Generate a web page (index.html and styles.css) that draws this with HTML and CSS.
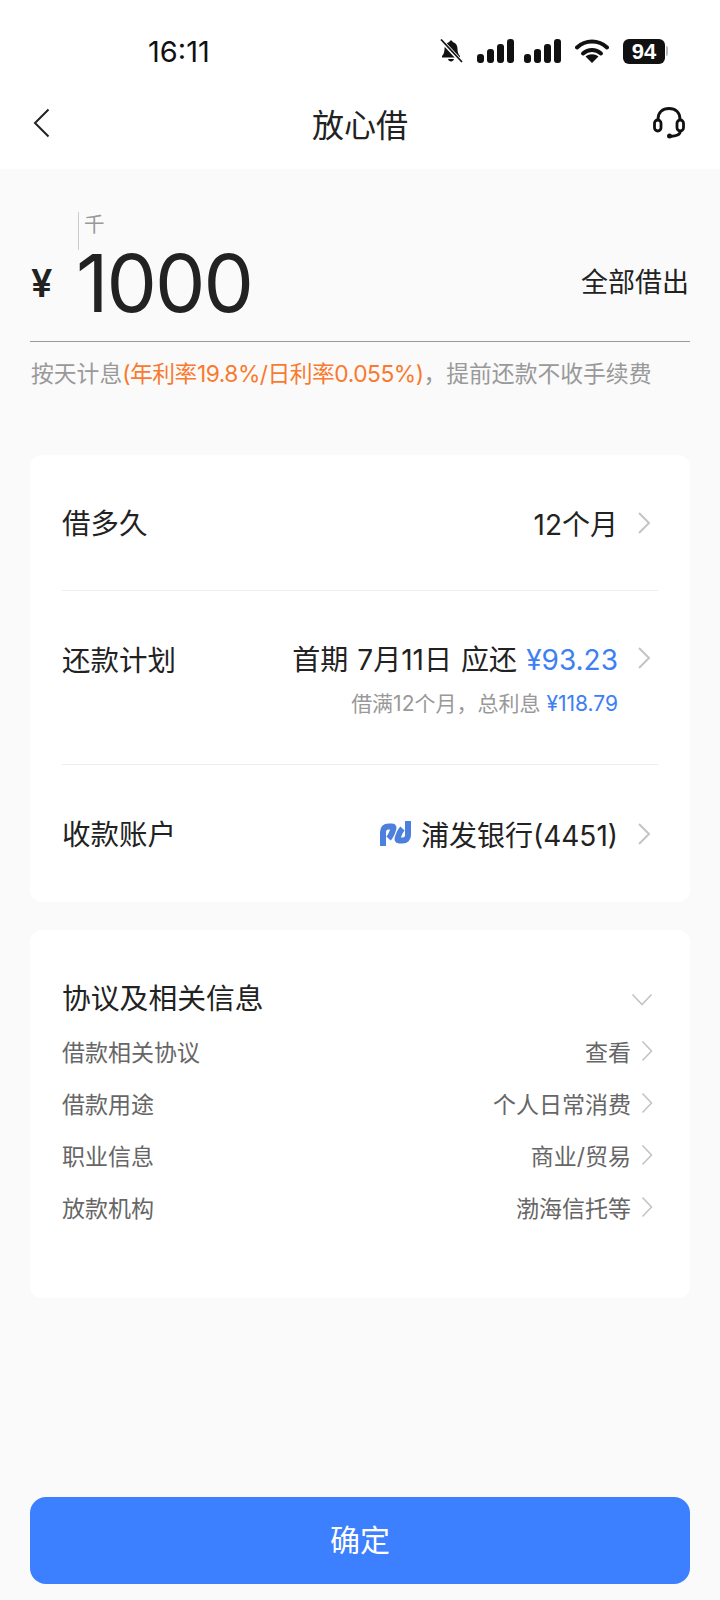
FILE: index.html
```html
<!DOCTYPE html>
<html lang="zh-CN">

<head>
    <meta charset="UTF-8">
    <meta name="viewport" content="width=device-width, initial-scale=1.0">
    <title>放心借</title>
    <link rel="stylesheet" href="styles.css">
</head>

<body>
    <div class="page">
        <header class="top">
            <div class="status">
                <span class="time">16:11</span>
                <div class="status-icons">
                    <svg class="ic-bell" width="24" height="24" viewBox="0 0 24 24">
                        <path d="M12 1.500c.9 0 1.600.7 1.700 1.500 3.300.8 4.800 3.500 4.800 6.800 0 3 .6 5.200 2.500 7.200v1.500H3V17c1.900-2 2.500-4.200 2.500-7.200 0-3.300 1.500-6 4.800-6.800.1-.8.8-1.500 1.700-1.500zM9 20h6c-.3 1.500-1.500 2.500-3 2.500S9.300 21.500 9 20z" fill="#111"/>
                        <path d="M1.500 0.500 22.500 23" stroke="#fff" stroke-width="4"/>
                        <path d="M2 0.500 23 23" stroke="#111" stroke-width="1.700"/>
                    </svg>
                    <svg class="ic-signal" width="37" height="24" viewBox="0 0 37 24">
                        <rect x="0" y="15" width="7" height="9" rx="3" fill="#111"/>
                        <rect x="10" y="10" width="7" height="14" rx="3" fill="#111"/>
                        <rect x="20" y="5" width="7" height="19" rx="3" fill="#111"/>
                        <rect x="30" y="0" width="7" height="24" rx="3" fill="#111"/>
                    </svg>
                    <svg class="ic-signal" width="37" height="24" viewBox="0 0 37 24">
                        <rect x="0" y="15" width="7" height="9" rx="3" fill="#111"/>
                        <rect x="10" y="10" width="7" height="14" rx="3" fill="#111"/>
                        <rect x="20" y="5" width="7" height="19" rx="3" fill="#111"/>
                        <rect x="30" y="0" width="7" height="24" rx="3" fill="#111"/>
                    </svg>
                    <svg class="ic-wifi" width="34" height="24" viewBox="0 0 34 24">
                        <path d="M2 8.500C10.500 .5 23.500 .5 32 8.500" fill="none" stroke="#111" stroke-width="4" stroke-linecap="round"/>
                        <path d="M8 14.500c5.200-4.700 12.800-4.700 18 0" fill="none" stroke="#111" stroke-width="4" stroke-linecap="round"/>
                        <path d="M17 24l-6.500-6.500c3.700-3 9.300-3 13 0z" fill="#111"/>
                    </svg>
                    <div class="battery">
                        <span class="battery-num">94</span>
                        <span class="battery-cap"></span>
                    </div>
                </div>
            </div>
            <nav class="nav">
                <svg class="ic-back" width="18" height="30" viewBox="0 0 18 30">
                    <path d="M15.500 1.500 2 15l13.500 13.500" fill="none" stroke="#222" stroke-width="2"/>
                </svg>
                <h1 class="nav-title">放心借</h1>
                <svg class="ic-service" width="34" height="32" viewBox="0 0 34 32">
                    <path d="M6 13V12C6 5.500 10.500 1.500 17 1.500S28 5.500 28 12v1" fill="none" stroke="#111" stroke-width="2.800"/>
                    <rect x="2.500" y="13" width="6.500" height="11" rx="3.200" fill="none" stroke="#111" stroke-width="2.800"/>
                    <rect x="25" y="13" width="6.500" height="11" rx="3.200" fill="none" stroke="#111" stroke-width="2.800"/>
                    <path d="M28.500 24c-.5 3-3 4.500-6 4.800l-4.500 .7" fill="none" stroke="#111" stroke-width="2.800"/>
                    <circle cx="17.500" cy="29" r="2.500" fill="#111"/>
                </svg>
            </nav>
        </header>

        <main class="content">
            <section class="amount">
                <div class="unit">千</div>
                <div class="amount-line">
                    <span class="yen">¥</span>
                    <span class="num">1000</span>
                    <span class="all">全部借出</span>
                </div>
            </section>
            <p class="hint">按天计息<span class="orange">(年利率19.8%/日利率0.055%)</span>，提前还款不收手续费</p>

            <section class="card card-main">
                <div class="row row-term">
                    <span class="row-label">借多久</span>
                    <div class="row-right">
                        <span>12个月</span>
                        <svg class="chev" width="14" height="24" viewBox="0 0 14 24"><path d="M2 2l10 10L2 22" fill="none" stroke="#c4c4c4" stroke-width="2"/></svg>
                    </div>
                </div>
                <div class="row row-plan">
                    <span class="row-label">还款计划</span>
                    <div class="plan">
                        <div class="row-right">
                            <span class="plan-main">首期 7月11日 应还 <span class="blue">¥93.23</span></span>
                            <svg class="chev" width="14" height="24" viewBox="0 0 14 24"><path d="M2 2l10 10L2 22" fill="none" stroke="#c4c4c4" stroke-width="2"/></svg>
                        </div>
                        <div class="plan-sub">借满12个月，总利息 <span class="blue">¥118.79</span></div>
                    </div>
                </div>
                <div class="row row-bank">
                    <span class="row-label">收款账户</span>
                    <div class="row-right">
                        <svg class="bank-logo" width="33" height="27" viewBox="0 0 33 27">
                            <path d="M4 26V12C4 8.500 6 6.500 9.500 6.500H13c1.500 0 1.800 1 1.300 2.500C13.300 12.500 12 16 9.500 18.500" fill="none" stroke="#4d7fdc" stroke-width="6"/>
                            <path d="M29 1V15C29 18.500 27 20.500 23.500 20.500H20c-1.500 0-1.800-1-1.300-2.500C19.700 14.500 21 11 23.500 8.500" fill="none" stroke="#4d7fdc" stroke-width="6"/>
                        </svg>
                        <span>浦发银行(4451)</span>
                        <svg class="chev" width="14" height="24" viewBox="0 0 14 24"><path d="M2 2l10 10L2 22" fill="none" stroke="#c4c4c4" stroke-width="2"/></svg>
                    </div>
                </div>
            </section>

            <section class="card card-info">
                <div class="info-head">
                    <h2 class="info-title">协议及相关信息</h2>
                    <svg class="chev-down" width="22" height="13" viewBox="0 0 22 13"><path d="M1.500 1.500 11 11.500l9.500-10" fill="none" stroke="#c4c4c4" stroke-width="1.600"/></svg>
                </div>
                <div class="info-row">
                    <span>借款相关协议</span>
                    <div class="info-right">
                        <span>查看</span>
                        <svg class="chev-s" width="12" height="22" viewBox="0 0 12 22"><path d="M1.500 1.500 10.500 11l-9 9.500" fill="none" stroke="#c4c4c4" stroke-width="1.600"/></svg>
                    </div>
                </div>
                <div class="info-row">
                    <span>借款用途</span>
                    <div class="info-right">
                        <span>个人日常消费</span>
                        <svg class="chev-s" width="12" height="22" viewBox="0 0 12 22"><path d="M1.500 1.500 10.500 11l-9 9.500" fill="none" stroke="#c4c4c4" stroke-width="1.600"/></svg>
                    </div>
                </div>
                <div class="info-row">
                    <span>职业信息</span>
                    <div class="info-right">
                        <span>商业/贸易</span>
                        <svg class="chev-s" width="12" height="22" viewBox="0 0 12 22"><path d="M1.500 1.500 10.500 11l-9 9.500" fill="none" stroke="#c4c4c4" stroke-width="1.600"/></svg>
                    </div>
                </div>
                <div class="info-row">
                    <span>放款机构</span>
                    <div class="info-right">
                        <span>渤海信托等</span>
                        <svg class="chev-s" width="12" height="22" viewBox="0 0 12 22"><path d="M1.500 1.500 10.500 11l-9 9.500" fill="none" stroke="#c4c4c4" stroke-width="1.600"/></svg>
                    </div>
                </div>
            </section>

            <button class="ok">确定</button>
        </main>
    </div>
</body>

</html>
```

FILE: styles.css
```css
* {
    margin: 0;
    padding: 0;
    box-sizing: border-box;
}

body {
    width: 720px;
    height: 1600px;
    overflow: hidden;
    font-family: "Inter", "Noto Sans CJK SC", sans-serif;
    color: #222;
    background: #fafafa;
}

.page {
    display: flex;
    flex-direction: column;
    height: 1600px;
}

/* header */
.top {
    height: 169px;
    background: #fff;
    flex-shrink: 0;
}

.status {
    display: flex;
    align-items: center;
    justify-content: space-between;
    height: 80px;
    padding: 22px 52px 0 148px;
}

.time {
    font-size: 29px;
    font-weight: 400;
    color: #111;
}

.status-icons {
    display: flex;
    align-items: center;
}

.ic-bell {
    margin-right: 14px;
}

.ic-signal {
    margin-right: 10px;
}

.ic-wifi {
    margin-left: 4px;
    margin-right: 14px;
}

.battery {
    display: flex;
    align-items: center;
}

.battery-num {
    display: block;
    width: 42px;
    height: 25px;
    line-height: 25px;
    text-align: center;
    border-radius: 6px;
    background: #111;
    color: #fff;
    font-family: "Liberation Sans", sans-serif;
    font-size: 22px;
    font-weight: 700;
}

.battery-cap {
    display: block;
    width: 2px;
    height: 10px;
    margin-left: 1px;
    background: #bbb;
    border-radius: 0 2px 2px 0;
}

.nav {
    display: grid;
    grid-template-columns: 1fr auto 1fr;
    align-items: center;
    height: 89px;
    padding: 0 33px 3px;
}

.ic-service {
    justify-self: end;
    margin-right: 1px;
}

.nav-title {
    font-size: 32px;
    font-weight: 400;
}

/* content */
.content {
    display: flex;
    flex-direction: column;
    flex: 1;
    padding: 0 30px;
}

.amount {
    padding-top: 43px;
    height: 173px;
    border-bottom: 1px solid #999;
}

.unit {
    width: fit-content;
    height: 38px;
    margin-left: 48px;
    padding-left: 5px;
    border-left: 1px solid #ccc;
    font-size: 20.500px;
    line-height: 26px;
    color: #999;
}

.amount-line {
    display: flex;
    align-items: center;
    height: 60px;
    margin-top: 3px;
}

.yen {
    width: 46px;
    padding-left: 1px;
    font-size: 38px;
    font-weight: 600;
}

.num {
    font-size: 80px;
    font-weight: 400;
    letter-spacing: -2px;
    line-height: 60px;
}

.all {
    margin-left: auto;
    margin-top: -6px;
    margin-right: 1px;
    font-size: 27px;
}

.hint {
    margin-top: 15px;
    font-size: 22.800px;
    line-height: 34px;
    color: #999;
    white-space: nowrap;
    padding-left: 1px;
}

.orange {
    color: #f97a2e;
    letter-spacing: -0.5px;
}

.card {
    background: #fff;
    border-radius: 12px;
    padding: 0 32px;
}

.card-main {
    margin-top: 64px;
    height: 447px;
}

.row {
    display: flex;
    justify-content: space-between;
    font-size: 28px;
    border-bottom: 1px solid #eee;
}

.row:last-child {
    border-bottom: none;
}

.row-term {
    height: 136px;
    align-items: center;
}

.row-plan {
    height: 174px;
    padding-top: 48px;
}

.row-bank {
    height: 137px;
    align-items: center;
}

.row-label {
    font-size: 28.500px;
    line-height: 38px;
    padding-top: 3px;
}

.row-right {
    display: flex;
    align-items: center;
    height: 38px;
    color: #222;
}

.chev {
    margin-left: 19px;
    margin-right: 7px;
}

.plan {
    display: flex;
    flex-direction: column;
    align-items: flex-end;
}

.plan-main {
    word-spacing: 1.200px;
}

.plan-sub {
    margin-top: 12px;
    margin-right: 40px;
    font-size: 21px;
    line-height: 30px;
    color: #999;
}

.blue {
    color: #3d80f5;
}

.bank-logo {
    margin-right: 9px;
}

.card-info {
    margin-top: 28px;
    height: 368px;
    padding-top: 46px;
}

.info-head {
    display: flex;
    align-items: center;
    justify-content: space-between;
    height: 40px;
    margin-bottom: 9px;
    padding-right: 5px;
}

.info-title {
    font-size: 28.800px;
    font-weight: 400;
}

.chev-down {
    margin-top: 6px;
}

.info-row {
    display: flex;
    align-items: center;
    justify-content: space-between;
    height: 52px;
    font-size: 23px;
    color: #666;
}

.info-right {
    display: flex;
    align-items: center;
}

.chev-s {
    margin-left: 10px;
    margin-right: 5px;
}

.ok {
    margin-top: auto;
    margin-bottom: 16px;
    height: 87px;
    padding-bottom: 5px;
    border: none;
    border-radius: 16px;
    background: #3d80ff;
    color: #fff;
    font-family: inherit;
    font-size: 30px;
    font-weight: 400;
}
```
